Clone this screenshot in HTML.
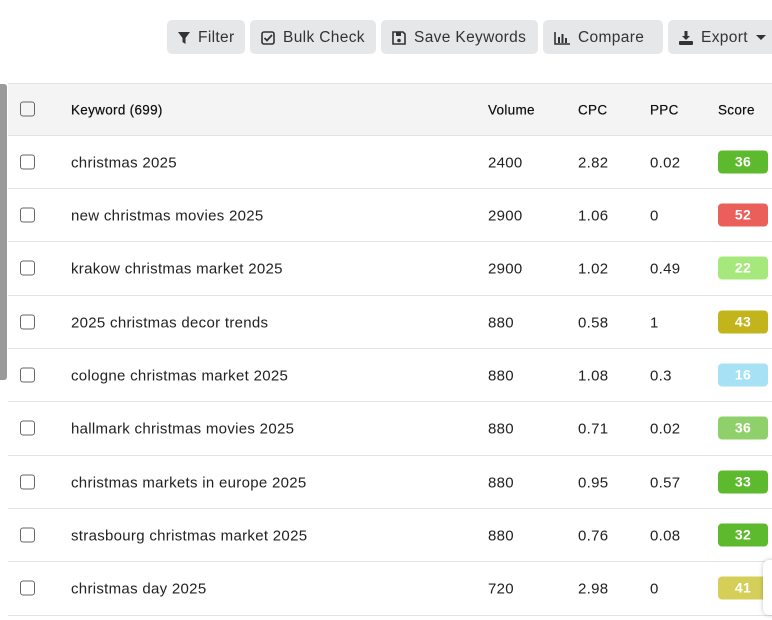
<!DOCTYPE html>
<html><head><style>
*{box-sizing:border-box;margin:0;padding:0}
body{width:772px;height:620px;overflow:hidden;background:#fff;font-family:"Liberation Sans",sans-serif;color:#222;position:relative}
.btn{position:absolute;top:20px;height:34px;background:#e6e7e9;border-radius:5px;font-size:15.5px;letter-spacing:.35px;color:#333;display:flex;align-items:center;padding-left:11px;padding-top:2px;gap:8px}
.sb{position:absolute;left:0;top:84px;width:7px;height:296px;background:#9a9a9a;border-radius:0 3px 3px 0}
.tbl{position:absolute;left:8px;top:83px;width:764px}
.row{height:53.35px;border-bottom:1px solid #e3e3e3;position:relative;font-size:15px;letter-spacing:.3px}
.hdr{background:#f4f4f5;border-top:1px solid #e3e3e3;font-size:13.5px;height:52.5px;color:#111;text-shadow:0 0 .4px #111}
.row span{position:absolute;top:calc(50% + 1px);transform:translateY(-50%)}
.row span.cb{top:50%}
.cb{left:12px;width:15px;height:15px;border:1.5px solid #666;border-radius:3px}
.k{left:63px}.v{left:480px}.c{left:570px}.p{left:642px}.s{left:710px}
.b{left:710px;width:50px;height:23px;border-radius:4px;color:#fff;font-weight:bold;font-size:14px;text-align:center;line-height:23px}
.row span.b{top:50%}
</style></head><body>
<div class="btn" style="left:167px;width:78px"><svg width="12" height="13" viewBox="0 0 12 13"><path d="M0 0H12L7.5 6V12L4.5 10V6Z" fill="#333"/></svg>Filter</div>
<div class="btn" style="left:250px;width:126px"><svg width="14" height="14" viewBox="0 0 14 14"><rect x="1" y="1" width="12" height="12" rx="2" fill="none" stroke="#333" stroke-width="1.6"/><path d="M3.5 7L6 9.5L11 4" fill="none" stroke="#333" stroke-width="1.8"/></svg>Bulk Check</div>
<div class="btn" style="left:381px;width:157px"><svg width="14" height="14" viewBox="0 0 14 14"><path d="M1 1H11L13 3V13H1Z" fill="none" stroke="#333" stroke-width="1.6"/><rect x="4" y="1.5" width="5" height="3.5" fill="#333"/><circle cx="7" cy="9.5" r="1.8" fill="#333"/></svg>Save Keywords</div>
<div class="btn" style="left:543px;width:120px"><svg width="16" height="13" viewBox="0 0 16 13"><path d="M1 0V12H16" fill="none" stroke="#333" stroke-width="1.6"/><rect x="4" y="5" width="2" height="6" fill="#333"/><rect x="7.5" y="2" width="2" height="9" fill="#333"/><rect x="11" y="6" width="2" height="5" fill="#333"/></svg>Compare</div>
<div class="btn" style="left:668px;width:110px"><svg width="14" height="14" viewBox="0 0 14 14"><path d="M5.5 0H8.5V5H11L7 9L3 5H5.5Z" fill="#333"/><rect x="0" y="10" width="14" height="4" rx="1" fill="#333"/></svg>Export <svg width="10" height="6" viewBox="0 0 10 6"><path d="M0 0H10L5 5Z" fill="#333"/></svg></div>
<div class="sb"></div>
<div class="tbl">
<div class="row hdr"><span class="cb"></span><span class="k">Keyword (699)</span><span class="v">Volume</span><span class="c">CPC</span><span class="p">PPC</span><span class="s">Score</span></div>
<div class="row"><span class="cb"></span><span class="k">christmas 2025</span><span class="v">2400</span><span class="c">2.82</span><span class="p">0.02</span><span class="b" style="background:#5db92d">36</span></div>
<div class="row"><span class="cb"></span><span class="k">new christmas movies 2025</span><span class="v">2900</span><span class="c">1.06</span><span class="p">0</span><span class="b" style="background:#ea5f5a">52</span></div>
<div class="row"><span class="cb"></span><span class="k">krakow christmas market 2025</span><span class="v">2900</span><span class="c">1.02</span><span class="p">0.49</span><span class="b" style="background:#a7e87d">22</span></div>
<div class="row"><span class="cb"></span><span class="k">2025 christmas decor trends</span><span class="v">880</span><span class="c">0.58</span><span class="p">1</span><span class="b" style="background:#c2b41a">43</span></div>
<div class="row"><span class="cb"></span><span class="k">cologne christmas market 2025</span><span class="v">880</span><span class="c">1.08</span><span class="p">0.3</span><span class="b" style="background:#a6e1f6">16</span></div>
<div class="row"><span class="cb"></span><span class="k">hallmark christmas movies 2025</span><span class="v">880</span><span class="c">0.71</span><span class="p">0.02</span><span class="b" style="background:#8fd06b">36</span></div>
<div class="row"><span class="cb"></span><span class="k">christmas markets in europe 2025</span><span class="v">880</span><span class="c">0.95</span><span class="p">0.57</span><span class="b" style="background:#5db92d">33</span></div>
<div class="row"><span class="cb"></span><span class="k">strasbourg christmas market 2025</span><span class="v">880</span><span class="c">0.76</span><span class="p">0.08</span><span class="b" style="background:#5db92d">32</span></div>
<div class="row"><span class="cb"></span><span class="k">christmas day 2025</span><span class="v">720</span><span class="c">2.98</span><span class="p">0</span><span class="b" style="background:#d5cf5a">41</span></div>
</div>
<div style="position:absolute;left:763px;top:560px;width:12px;height:55px;background:#fff;border-radius:6px 0 0 6px;box-shadow:0 0 4px rgba(0,0,0,.25)"></div>
</body></html>
